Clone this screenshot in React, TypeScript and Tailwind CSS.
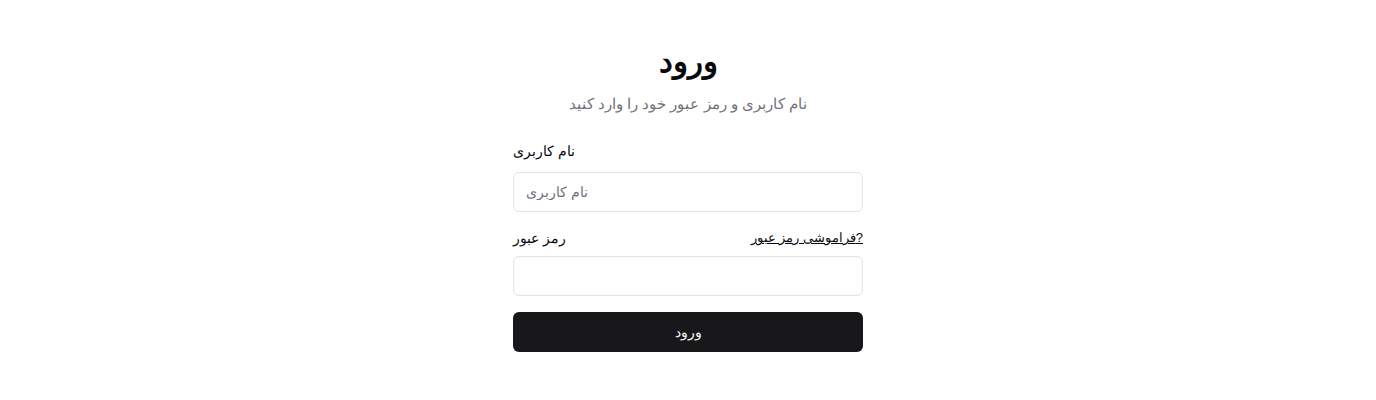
export default function App() {
  return (
    <div className="min-h-screen bg-white font-['Liberation_Sans',sans-serif] text-[#09090b]">
      <div className="mx-auto flex w-[350px] flex-col pt-[44px]">
        <div className="flex flex-col items-center text-center">
          <h1 className="text-[31px] font-bold leading-[36px]">ورود</h1>
          <p className="mt-[14px] text-[14.5px] leading-[20px] text-[#71717a]">
            نام کاربری و رمز عبور خود را وارد کنید
          </p>
        </div>

        <form className="mt-[28px] flex flex-col">
          <label className="text-[13.5px] font-medium leading-[20px]">نام کاربری</label>
          <input
            type="text"
            placeholder="نام کاربری"
            className="mt-[10px] h-[40px] w-full rounded-md border border-[#e4e4e7] px-3 text-[13.5px] placeholder:text-[#71717a] outline-none"
          />

          <div className="mt-[16px] flex items-center justify-between text-[14px] leading-[20px]">
            <label>رمز عبور</label>
            <a href="#" dir="ltr" className="text-[13px] underline">
              {"فراموشی رمز عبور?"}
            </a>
          </div>
          <input
            type="password"
            className="mt-[8px] h-[40px] w-full rounded-md border border-[#e4e4e7] px-3 text-[14px] outline-none"
          />

          <button
            type="button"
            className="mt-[16px] h-[40px] w-full rounded-md bg-[#18181b] text-[14px] text-[#fafafa]"
          >
            ورود
          </button>
        </form>
      </div>
    </div>
  );
}
